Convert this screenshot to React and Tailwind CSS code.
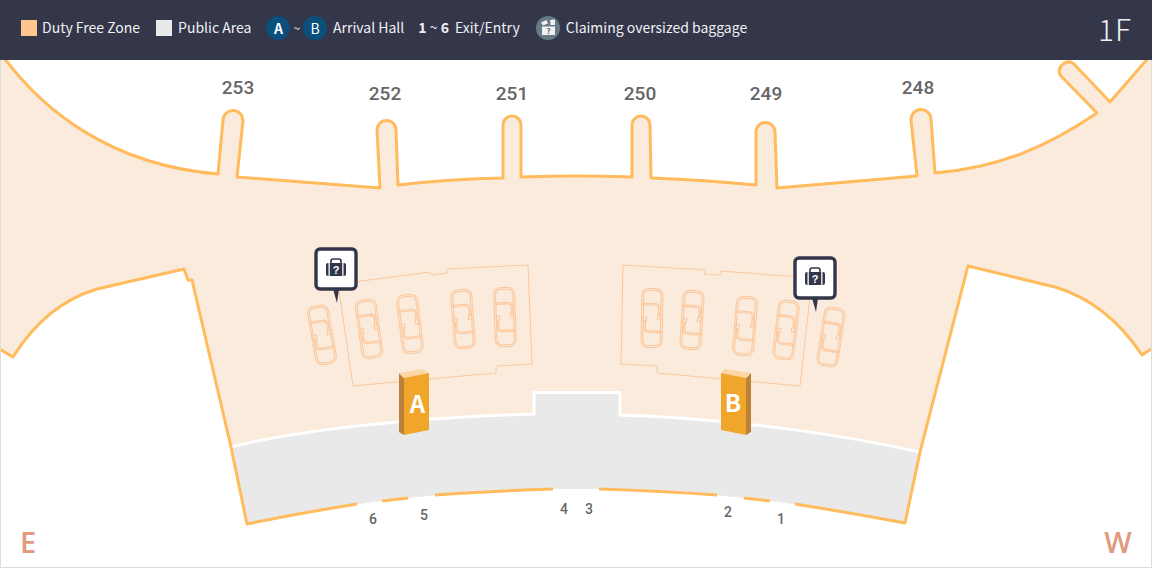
const carousels = [
  [322, 335, -10],
  [369, 329, -8],
  [410, 324, -7],
  [463, 319, -4],
  [505, 317, -2],
  [652, 318, 1],
  [692, 320, 4],
  [745, 326, 5],
  [786, 330, 7],
  [831, 337, 9],
];

const gates = [
  ["253", 238, 94],
  ["252", 385, 100],
  ["251", 512, 100],
  ["250", 640, 100],
  ["249", 766, 100],
  ["248", 918, 94],
];

const exits = [
  ["6", 373, 524],
  ["5", 424, 520],
  ["4", 564, 514],
  ["3", 589, 514],
  ["2", 728, 517],
  ["1", 781, 524],
];

const outline =
  "M-3,48 C40,110 110,165 218,174 L223,120 A10,10 0 0 1 243,121 L237,177 L380,188 L377,130 A9.5,9.5 0 0 1 396,130 L398,185 Q450,179 503,178 L503,125 A9,9 0 0 1 521,125 L521,177 Q576,175 632,177 L632,125 A9,9 0 0 1 650,125 L651,178 Q705,180 756,185 L756,132 A9.5,9.5 0 0 1 775,132 L777,188 Q850,182 917,176 L911,120 A10,10 0 0 1 931,119 L935,173 C1000,168 1050,145 1097,113 L1060,75 A9.5,9.5 0 0 1 1073,63 L1110,102 L1157,48";

const wings =
  "M1157,48 L1165,48 L1165,340 L1142,355 C1120,322 1092,298 1055,287 L968,266 L920,452 L905,523 Q852,513 795,504 L770,501 L744,498 L717,495 Q662,491 599,489 L553,489 Q490,491 435,495 L408,498 L382,501 L357,504 Q300,513 247,524 L231,447 L192,280 L188,280 L184,269 L97,289 C60,300 33,325 13,357 L-12,342 L-12,48 Z";

const publicFloor =
  "M231,447 C290,432 400,418 535,414 L535,392 L620,392 L620,415 C720,418 830,432 920,452 L905,523 Q852,513 795,504 L770,501 L744,498 L717,495 Q662,491 599,489 L553,489 Q490,491 435,495 L408,498 L382,501 L357,504 Q300,513 247,524 Z";

// one baggage carousel, drawn around its own centre
function Carousel({ x, y, angle }) {
  const belt = (
    <g>
      <path d="M-10,-14.5 H3 Q8,-14.5 8,-9 V-3" />
      <path d="M-10,-13 H3 Q6.5,-13 6.5,-9 V-3" />
      <rect x="5.5" y="-3" width="3.4" height="3.8" />
    </g>
  );
  return (
    <g transform={`translate(${x} ${y}) rotate(${angle})`}>
      <rect x="-10.5" y="-29.5" width="21" height="59" rx="7" />
      <rect x="-8.7" y="-27.7" width="17.4" height="55.4" rx="5.2" />
      {belt}
      <g transform="rotate(180)">{belt}</g>
    </g>
  );
}

function BaggagePin({ x, y }) {
  return (
    <g transform={`translate(${x} ${y})`}>
      <path d="M-3,20 L3,20 L1,34 Z" className="fill-[#33364b]" />
      <rect x="-20" y="-20" width="40" height="40" rx="4" className="fill-white stroke-[#33364b] stroke-[3.4]" />
      <path d="M-5,-6 V-8 Q-5,-10 -3,-10 H3 Q5,-10 5,-8 V-6" className="fill-none stroke-[#33364b] stroke-[1.6]" />
      <path d="M-10,-4 Q-10,-6 -8,-6 H-7.5 V7 H-8 Q-10,7 -10,5 Z M-6.2,-6 H6.2 V7 H-6.2 Z M7.5,-6 H8 Q10,-6 10,-4 V5 Q10,7 8,7 H7.5 Z" className="fill-[#33364b]" />
      <text x="0" y="5" textAnchor="middle" className="fill-white text-[11px] font-bold [font-family:'Liberation_Sans',sans-serif]">?</text>
    </g>
  );
}

function Legend({ children }) {
  return <span className="block -translate-y-px text-[14px] leading-none whitespace-nowrap text-[#f1f1f4]">{children}</span>;
}

export default function App() {
  return (
    <div className="flex h-[568px] w-[1152px] flex-col overflow-hidden bg-white [font-family:'Noto_Sans_CJK_KR','Noto_Sans',sans-serif]">
      <header className="flex h-[60px] shrink-0 items-center bg-[#34364a] pr-[20px] pb-[4px] pl-[21px]">
        <span className="h-4 w-4 bg-[#ffc68f]" />
        <span className="ml-[5px]"><Legend>Duty Free Zone</Legend></span>
        <span className="ml-[16px] h-4 w-4 bg-[#e9e9e9]" />
        <span className="ml-[6px]"><Legend>Public Area</Legend></span>
        <span className="ml-[15px] flex h-6 w-6 items-center justify-center rounded-full bg-[#0b4f7d] text-[14px] font-bold text-white">A</span>
        <span className="mx-[3px] text-[12px] text-[#f1f1f4]">~</span>
        <span className="flex h-6 w-6 items-center justify-center rounded-full bg-[#0b4f7d] text-[14px] text-white">B</span>
        <span className="ml-[6px]"><Legend>Arrival Hall</Legend></span>
        <span className="ml-[14px] block -translate-y-px text-[14px] leading-none font-bold whitespace-nowrap text-[#f1f1f4]">
          1 <span className="font-normal">~</span> 6
        </span>
        <span className="ml-[6px]"><Legend>Exit/Entry</Legend></span>
        <svg viewBox="0 0 24 24" className="ml-[16px] h-6 w-6">
          <circle cx="12" cy="12" r="12" fill="#667b85" />
          <path d="M5,6.5 L10.5,4 L12,7.5 L7,9.5 Z M14,4 L19,3.5 L19,9 L14.5,9 Z" fill="#f1f1f4" />
          <rect x="6" y="10.5" width="13" height="8.5" fill="#f1f1f4" />
          <text x="12.5" y="18" textAnchor="middle" fill="#55666e" className="text-[8px] font-bold">?</text>
        </svg>
        <span className="ml-[6px]"><Legend>Claiming oversized baggage</Legend></span>
        <span className="ml-auto text-[30px] leading-none font-light tracking-[1px] text-[#f1f1f4]">1F</span>
      </header>

      <div className="relative flex-1">
        <svg viewBox="0 60 1152 508" className="block h-[508px] w-[1152px]">
          <path d={`${outline} ${wings}`} fill="#fbebdc" />
          <path d={publicFloor} fill="#e9e9e9" />
          <path d="M231,447 C290,432 400,418 534,414 L534,392.5 L620,392.5 L620,415 C720,418 830,432 920,452" fill="none" stroke="#ffffff" strokeWidth="3" />

          <g fill="none" stroke="#fcc89d" strokeWidth="1">
            <path d="M338,284 L430,272 L432,275 L447,273 L447,269 L528,265 L532,364 L496,366 L496,373 L353,386 Z" />
            <path d="M623,265 L706,270 L704,274 L721,275 L721,271 L812,278 L800,386 L657,373 L657,366 L621,364 Z" />
            <g strokeWidth="1.1">
              {carousels.map(([x, y, angle]) => (
                <Carousel key={x} x={x} y={y} angle={angle} />
              ))}
            </g>
          </g>

          <g fill="none" stroke="#ffbb5c" strokeWidth="3" strokeLinejoin="round">
            <path d={outline} />
            <path d="M-12,342 L13,357 C33,325 60,300 97,289 L184,269 L188,280 L192,280 L231,447 L247,524 Q300,513 357,504" />
            <path d="M382,501 L408,498" />
            <path d="M435,495 Q490,491 553,489" />
            <path d="M599,489 Q662,491 717,495" />
            <path d="M744,498 L770,501" />
            <path d="M795,504 Q852,513 905,523 L920,452 L968,266 L1055,287 C1092,298 1120,322 1142,355 L1165,340" />
          </g>

          <polygon points="399,373 404,378 404,435 399,432" fill="#bd823a" />
          <polygon points="399,373 423,369 429,373 404,378" fill="#fdd6a8" />
          <polygon points="404,378 429,373 429,430 404,435" fill="#f0a62b" />
          <polygon points="746,378 751,373 751,432 746,435" fill="#bd823a" />
          <polygon points="721,373 725,369 751,373 746,378" fill="#fdd6a8" />
          <polygon points="721,373 746,378 746,435 721,430" fill="#f0a62b" />
          <text x="417.5" y="413" textAnchor="middle" fill="#ffffff" className="text-[24px] font-bold">A</text>
          <text x="733" y="412" textAnchor="middle" fill="#ffffff" className="text-[24px] font-bold">B</text>

          <BaggagePin x={336} y={269} />
          <BaggagePin x={815} y={278} />

          <g fill="#666666" textAnchor="middle" className="text-[19px] font-medium [font-family:Roboto,sans-serif]">
            {gates.map(([label, x, y]) => (
              <text key={label} x={x} y={y}>{label}</text>
            ))}
          </g>
          <g fill="#666666" textAnchor="middle" className="text-[14px] font-medium [font-family:Roboto,sans-serif]">
            {exits.map(([label, x, y]) => (
              <text key={label} x={x} y={y}>{label}</text>
            ))}
          </g>
          <g fill="#e09a7c" textAnchor="middle" className="text-[29px] font-semibold [font-family:'Open_Sans',sans-serif]">
            <text x="28" y="553">E</text>
            <text x="1118" y="553">W</text>
          </g>
        </svg>
        <div className="pointer-events-none absolute inset-0 border-x border-b border-[#dddddd]" />
      </div>
    </div>
  );
}
